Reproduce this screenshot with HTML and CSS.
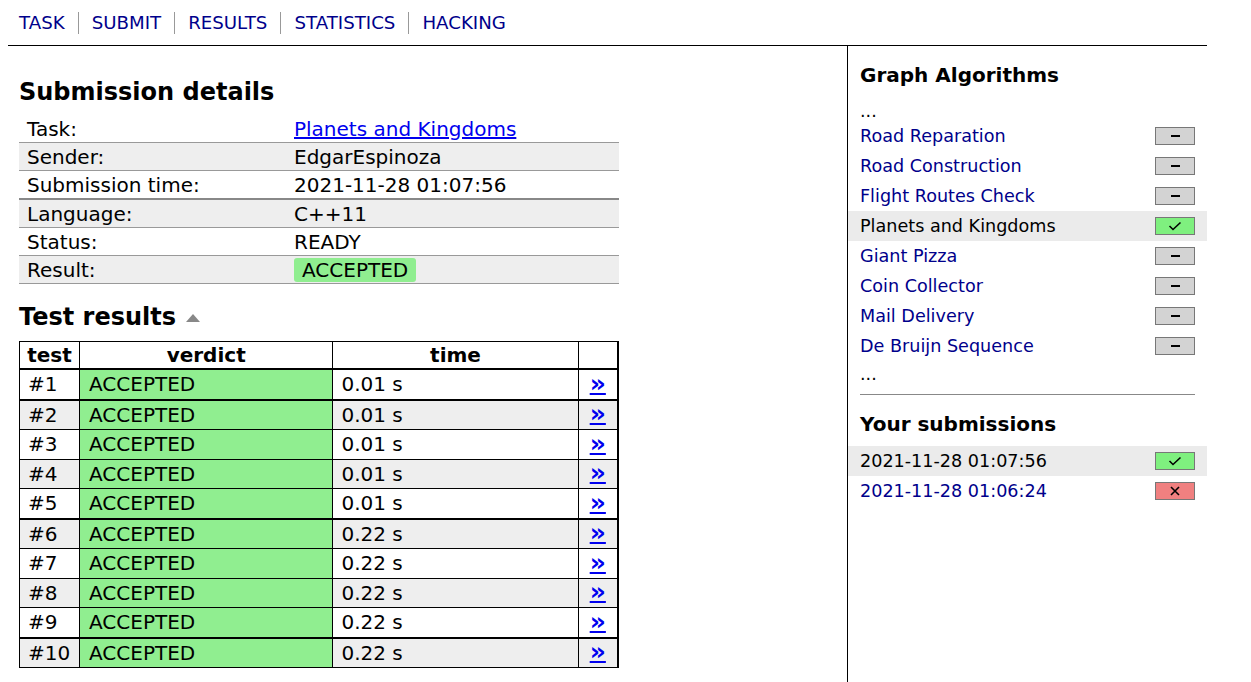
FILE: index.html
```html
<!DOCTYPE html>
<html>
<head>
<meta charset="utf-8">
<link rel="stylesheet" href="styles.css">
</head>
<body>
<div class="page">
  <nav class="topnav">
    <a href="#">TASK</a><span class="sep"></span>
    <a href="#">SUBMIT</a><span class="sep"></span>
    <a href="#">RESULTS</a><span class="sep"></span>
    <a href="#">STATISTICS</a><span class="sep"></span>
    <a href="#">HACKING</a>
  </nav>
  <div class="layout">
    <main class="main">
      <h2 class="title">Submission details</h2>
      <table class="summary">
        <tr><td class="k">Task:</td><td><a class="tasklink" href="#">Planets and Kingdoms</a></td></tr>
        <tr class="alt"><td class="k">Sender:</td><td>EdgarEspinoza</td></tr>
        <tr class="thick"><td class="k">Submission time:</td><td>2021-11-28 01:07:56</td></tr>
        <tr class="alt"><td class="k">Language:</td><td>C++11</td></tr>
        <tr><td class="k">Status:</td><td>READY</td></tr>
        <tr class="alt"><td class="k">Result:</td><td><span class="badge">ACCEPTED</span></td></tr>
      </table>
      <h2 class="title tr-title">Test results <span class="tri"></span></h2>
      <table class="tests">
        <colgroup><col class="c1"><col class="c2"><col class="c3"><col class="c4"></colgroup>
        <tr class="head"><th>test</th><th>verdict</th><th>time</th><th></th></tr>
        <tr class="g"><td>#1</td><td class="ok">ACCEPTED</td><td>0.01 s</td><td class="lk"><a href="#">»</a></td></tr>
        <tr class="alt"><td>#2</td><td class="ok">ACCEPTED</td><td>0.01 s</td><td class="lk"><a href="#">»</a></td></tr>
        <tr><td>#3</td><td class="ok">ACCEPTED</td><td>0.01 s</td><td class="lk"><a href="#">»</a></td></tr>
        <tr class="alt"><td>#4</td><td class="ok">ACCEPTED</td><td>0.01 s</td><td class="lk"><a href="#">»</a></td></tr>
        <tr class="g"><td>#5</td><td class="ok">ACCEPTED</td><td>0.01 s</td><td class="lk"><a href="#">»</a></td></tr>
        <tr class="alt"><td>#6</td><td class="ok">ACCEPTED</td><td>0.22 s</td><td class="lk"><a href="#">»</a></td></tr>
        <tr><td>#7</td><td class="ok">ACCEPTED</td><td>0.22 s</td><td class="lk"><a href="#">»</a></td></tr>
        <tr class="alt"><td>#8</td><td class="ok">ACCEPTED</td><td>0.22 s</td><td class="lk"><a href="#">»</a></td></tr>
        <tr class="g"><td>#9</td><td class="ok">ACCEPTED</td><td>0.22 s</td><td class="lk"><a href="#">»</a></td></tr>
        <tr class="alt"><td>#10</td><td class="ok">ACCEPTED</td><td>0.22 s</td><td class="lk"><a href="#">»</a></td></tr>
      </table>
    </main>
    <aside class="side">
      <h3 class="stitle">Graph Algorithms</h3>
      <div class="dots first">...</div>
      <ul class="tasklist">
        <li><a href="#">Road Reparation</a><span class="st none"><span class="dash"></span></span></li>
        <li><a href="#">Road Construction</a><span class="st none"><span class="dash"></span></span></li>
        <li><a href="#">Flight Routes Check</a><span class="st none"><span class="dash"></span></span></li>
        <li class="cur"><span class="curtext">Planets and Kingdoms</span><span class="st good"><svg width="14" height="10" viewBox="0 0 14 10"><path d="M1.5 5 L5 8.5 L12.5 1.5" fill="none" stroke="#000" stroke-width="1.6"/></svg></span></li>
        <li><a href="#">Giant Pizza</a><span class="st none"><span class="dash"></span></span></li>
        <li><a href="#">Coin Collector</a><span class="st none"><span class="dash"></span></span></li>
        <li><a href="#">Mail Delivery</a><span class="st none"><span class="dash"></span></span></li>
        <li><a href="#">De Bruijn Sequence</a><span class="st none"><span class="dash"></span></span></li>
      </ul>
      <div class="dots last">...</div>
      <hr class="rule">
      <h3 class="stitle sub">Your submissions</h3>
      <ul class="tasklist">
        <li class="cur"><span class="curtext">2021-11-28 01:07:56</span><span class="st good"><svg width="14" height="10" viewBox="0 0 14 10"><path d="M1.5 5 L5 8.5 L12.5 1.5" fill="none" stroke="#000" stroke-width="1.6"/></svg></span></li>
        <li><a href="#">2021-11-28 01:06:24</a><span class="st bad"><svg width="10" height="10" viewBox="0 0 10 10"><path d="M1 1 L9 9 M9 1 L1 9" fill="none" stroke="#000" stroke-width="1.6"/></svg></span></li>
      </ul>
    </aside>
  </div>
</div>
</body>
</html>
```
FILE: styles.css
```css
html, body {
  margin: 0;
  padding: 0;
  background: #fff;
}
body {
  font-family: "DejaVu Sans", Verdana, sans-serif;
  font-size: 17.6px;
  color: #000;
}
.page {
  width: 1199px;
  margin-left: 8px;
}
.topnav {
  height: 45px;
  border-bottom: 1px solid #000;
  display: flex;
  align-items: center;
  padding-left: 11px;
}
.topnav a {
  color: #00008b;
  text-decoration: none;
  font-size: 18.2px;
  line-height: 20px;
}
.topnav .sep {
  width: 1px;
  height: 22px;
  background: #999;
  margin: 0 13px;
}
.layout {
  display: flex;
  align-items: stretch;
  min-height: 636px;
}
.main {
  width: 828px;
  padding: 31px 0 0 11px;
  border-right: 1px solid #000;
}
.title {
  margin: 0;
  font-size: 24px;
  line-height: 30px;
  font-weight: bold;
}
.summary, .tests {
  font-size: 20px;
}
.summary {
  margin-top: 8px;
  width: 600px;
  border-collapse: collapse;
}
.summary td {
  height: 27px;
  padding: 0 8px;
  border-bottom: 1px solid #999;
  line-height: 22px;
}
.summary td.k {
  width: 251px;
}
.summary tr.alt td {
  background: #eee;
}
.summary tr.thick td {
  border-bottom: 2px solid #888;
}
.tasklink {
  color: #0000ee;
  text-decoration: underline;
}
.badge {
  display: inline-block;
  background: #90ee90;
  border-radius: 3px;
  padding: 1px 8px;
  line-height: 22px;
}
.tr-title {
  margin-top: 18px;
  display: flex;
  align-items: center;
}
.tri {
  display: inline-block;
  width: 0;
  height: 0;
  border-left: 7px solid transparent;
  border-right: 7px solid transparent;
  border-bottom: 8px solid #888;
  margin-left: 10px;
  margin-top: 2px;
}
.tests {
  margin-top: 9px;
  width: 600px;
  border-collapse: collapse;
  border: 1px solid #000;
  border-right: 2px solid #000;
}
.tests col.c1 { width: 60px; }
.tests col.c2 { width: 254px; }
.tests col.c3 { width: 246px; }
.tests col.c4 { width: 40px; }
.tests th {
  height: 26px;
  font-weight: bold;
  text-align: center;
  border: 1px solid #000;
  border-bottom: 2px solid #000;
  padding: 0;
  line-height: 22px;
}
.tests td {
  height: 28.5px;
  border: 1px solid #000;
  padding: 0 8px;
  line-height: 22px;
}
.tests tr.g td {
  border-bottom: 2px solid #000;
}
.tests tr.alt td {
  background: #eee;
}
.tests td.ok {
  background: #90ee90 !important;
  padding-left: 9px;
}
.tests td.lk {
  text-align: center;
  padding: 0;
}
.tests td.lk a {
  color: #0000ee;
  font-weight: bold;
  font-size: 25px;
  line-height: 22px;
  text-decoration: underline;
  text-decoration-thickness: 2px;
  text-underline-offset: 1px;
}
.side {
  width: 359px;
  padding-top: 16px;
}
.stitle {
  margin: 0 12px;
  font-size: 20px;
  line-height: 26px;
  font-weight: bold;
}
.dots {
  padding: 0 12px;
  line-height: 30px;
  height: 25px;
}
.dots.first {
  margin-top: 8px;
}
.dots.last {
  margin-top: -2px;
}
.tasklist {
  list-style: none;
  margin: 0;
  padding: 0;
}
.tasklist li {
  height: 30px;
  display: flex;
  align-items: center;
  justify-content: space-between;
  padding: 0 12px;
}
.tasklist li a {
  color: #00008b;
  text-decoration: none;
}
.tasklist li.cur {
  background: #ebebeb;
}
.st {
  width: 38px;
  height: 16px;
  border: 1px solid #777;
  display: flex;
  align-items: center;
  justify-content: center;
}
.st.none { background: #d3d3d3; }
.st.good { background: #7ff07f; }
.st.bad { background: #f08080; }
.dash {
  width: 9px;
  height: 2px;
  background: #000;
}
.rule {
  border: 0;
  border-top: 1px solid #888;
  margin: 10px 12px 0;
}
.sub {
  margin-top: 16px;
  margin-bottom: 9px;
}
```
